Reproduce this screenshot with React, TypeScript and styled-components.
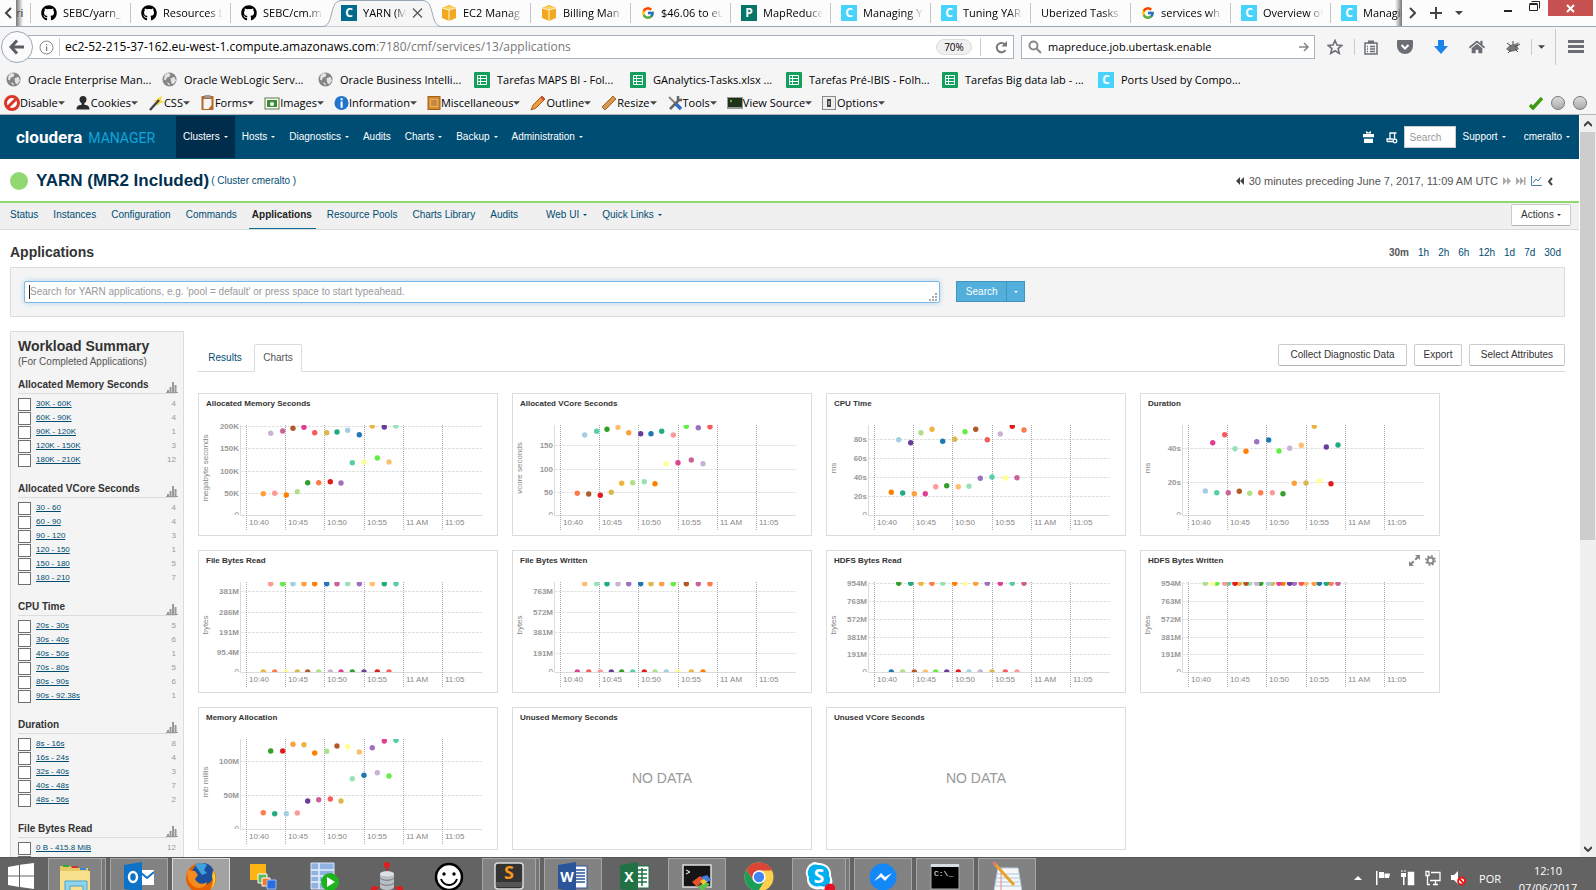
import React from "react";
import styled, { createGlobalStyle, css } from "styled-components";
import { FaGithub, FaHome } from "react-icons/fa";
import { FcGoogle } from "react-icons/fc";

const sans = `"Liberation Sans", Arial, sans-serif`;
const ui = `"Open Sans", "Segoe UI", sans-serif`;
const navy = "#004d73";

const GlobalStyle = createGlobalStyle`
  * { box-sizing: border-box; }
  html, body, #root { height: 100%; }
  body { margin: 0; background: #fff; font-family: ${sans}; }
  button { font: inherit; color: inherit; border: 0; background: none; padding: 0; margin: 0; }
  a { color: inherit; text-decoration: none; }
  h1, h2, h3 { margin: 0; }
  svg { display: block; flex: none; }
`;

const Screen = styled.div`
  height: 100vh;
  display: flex;
  flex-direction: column;
  overflow: hidden;
`;

/* ---------- browser chrome ---------- */

const Chrome = styled.header`
  background: #f5f5f6;
  border-bottom: 1px solid #b6b6b6;
  font: 11px/16px ${ui};
  color: #000;
  flex: none;
`;

const TabStrip = styled.div`
  height: 27px;
  display: flex;
  background: #fcfcfc;
  border-bottom: 1px solid #9aa7b5;
`;

const StripButton = styled.button<{ $w: number }>`
  width: ${(p) => p.$w}px;
  height: 26px;
  display: flex;
  align-items: center;
  justify-content: center;
  flex: none;
`;

const TabList = styled.div`
  position: relative;
  flex: 1;
  min-width: 0;
  height: 27px;
  display: flex;
  overflow: hidden;
  &::before, &::after {
    content: "";
    position: absolute;
    top: 0;
    bottom: 1px;
    width: 7px;
    z-index: 2;
  }
  &::before { left: 0; background: linear-gradient(to right, #777, transparent); }
  &::after { right: 0; background: linear-gradient(to left, #777, transparent); }
`;

const TabItem = styled.button<{ $active?: boolean; $stub?: boolean; $noEdge?: boolean }>`
  position: relative;
  flex: none;
  width: ${(p) => (p.$stub ? 15 : 100)}px;
  height: 26px;
  padding: 0 8px 0 ${(p) => (p.$stub ? 0 : 10)}px;
  display: flex;
  align-items: center;
  gap: 6px;
  text-align: left;
  ${(p) => p.$active && css`z-index: 1;`}
  &::after {
    content: "";
    position: absolute;
    right: 0;
    top: 3px;
    width: 1px;
    height: 20px;
    background: ${(p) => (p.$active || p.$noEdge ? "transparent" : "#c4c4c4")};
  }
`;

const TabShape = styled.svg`
  position: absolute;
  left: -11px;
  top: 0;
  z-index: -1;
`;

const TabText = styled.span`
  flex: 1;
  min-width: 0;
  overflow: hidden;
  white-space: nowrap;
  mask-image: linear-gradient(to right, #000 75%, transparent);
`;

const WindowControls = styled.div`
  display: flex;
  align-items: flex-start;
  padding: 0 3px 0 29px;
`;

const CloseButton = styled.button`
  width: 45px;
  height: 16px;
  background: #c75050;
  display: flex;
  align-items: center;
  justify-content: center;
`;

const AddressRow = styled.div`
  height: 40px;
  display: flex;
  align-items: center;
  padding-right: 5px;
`;

const BackButton = styled.button`
  width: 32px;
  height: 32px;
  margin-left: 1px;
  border: 1px solid #9aa7b5;
  border-radius: 50%;
  background: #fbfbfb;
  display: flex;
  align-items: center;
  justify-content: center;
  z-index: 1;
`;

const Field = styled.label<{ $search?: boolean }>`
  height: 24px;
  display: flex;
  align-items: center;
  background: #fff;
  border: 1px solid #a9b3bd;
  padding-left: ${(p) => (p.$search ? 6 : 10)}px;
  margin-left: ${(p) => (p.$search ? 7 : -5)}px;
  ${(p) => (p.$search ? css`flex: 0 0 294px;` : css`flex: 1;`)}
`;

const Url = styled.span`
  flex: 1;
  white-space: nowrap;
  font-size: 12px;
  span { color: #777; }
`;

const FieldInput = styled.input`
  flex: 1;
  min-width: 0;
  border: 0;
  outline: 0;
  padding: 0;
  margin-left: 6px;
  font: inherit;
  color: #000;
`;

const ZoomBadge = styled.button`
  width: 36px;
  height: 16px;
  border-radius: 8px;
  border: 1px solid #ddd;
  background: #f0f0f0;
  font-size: 10px;
  line-height: 14px;
`;

const Divider = styled.i<{ $h: number; $m?: number }>`
  width: 1px;
  height: ${(p) => p.$h}px;
  margin: 0 ${(p) => p.$m ?? 0}px;
  background: #ccc;
  flex: none;
`;

const ToolButton = styled.button<{ $w: number }>`
  width: ${(p) => p.$w}px;
  height: 24px;
  display: flex;
  align-items: center;
  justify-content: center;
  color: #6b6f75;
  flex: none;
`;

const BookmarkRow = styled.nav`
  height: 25px;
  display: flex;
  align-items: center;
  padding-left: 6px;
`;

const Bookmark = styled.a`
  width: 156px;
  display: flex;
  align-items: center;
  gap: 7px;
  white-space: nowrap;
`;

const DevRow = styled.div`
  height: 22px;
  display: flex;
  align-items: center;
  padding: 0 9px 0 4px;
  gap: 10px;
`;

const DevButton = styled.button`
  display: flex;
  align-items: center;
  white-space: nowrap;
  line-height: 16px;
`;

const Status = styled.div`
  margin-left: auto;
  display: flex;
  align-items: center;
  gap: 8px;
`;

const Lamp = styled.i`
  width: 14px;
  height: 14px;
  border-radius: 50%;
  border: 1px solid #777;
  background: linear-gradient(#dcdcdc, #aaa);
`;

const Letter = styled.span<{ $bg: string }>`
  width: 16px;
  height: 16px;
  background: ${(p) => p.$bg};
  color: #fff;
  font: bold 12px/16px ${ui};
  text-align: center;
  flex: none;
`;

/* ---------- page ---------- */

const Viewport = styled.div`
  flex: 1;
  min-height: 0;
  display: flex;
  overflow: hidden;
`;

const Page = styled.div`
  flex: 1;
  min-width: 0;
  overflow: hidden;
  color: #333;
  font-size: 10px;
  line-height: 14px;
`;

const ScrollTrack = styled.div`
  width: 17px;
  background: #f0f0f0;
  border-left: 1px solid #fff;
  display: flex;
  flex-direction: column;
  flex: none;
`;

const ScrollButton = styled.button`
  height: 17px;
  display: flex;
  align-items: center;
  justify-content: center;
`;

const ScrollThumb = styled.div`
  flex: 0 0 55%;
  margin-right: 1px;
  background: #cdcdcd;
`;

const Spacer = styled.div`
  flex: 1;
`;

const TopNav = styled.nav`
  height: 44px;
  background: ${navy};
  color: #fff;
  display: flex;
  align-items: center;
  padding: 0 2px 0 16px;
`;

const Brand = styled.a`
  width: 160px;
  display: flex;
  align-items: baseline;
  gap: 6px;
  font: bold 17px/20px Roboto, ${sans};
  span { font-weight: 400; font-size: 14px; color: #12a5dc; }
`;

const NavButton = styled.button<{ $active?: boolean }>`
  height: 42px;
  padding: 0 7px;
  display: flex;
  align-items: center;
  gap: 4px;
  white-space: nowrap;
  background: ${(p) => (p.$active ? "#002d4c" : "none")};
`;

const NavIcons = styled.div`
  margin-left: auto;
  display: flex;
  align-items: center;
  gap: 12px;
  margin-right: 6px;
`;

const NavUser = styled.div`
  display: flex;
  gap: 4px;
`;

const NavSearch = styled.input`
  width: 52px;
  height: 22px;
  padding: 0 5px;
  border: 1px solid #ccc;
  font: 10px ${sans};
  &::placeholder { color: #999; opacity: 1; }
`;

const TitleBar = styled.div`
  height: 44px;
  border-bottom: 2px solid #90d970;
  display: flex;
  align-items: center;
  padding: 1px 26px 0 10px;
`;

const Health = styled.i`
  width: 18px;
  height: 18px;
  border-radius: 50%;
  background: #90d970;
  margin-right: 8px;
`;

const ServiceName = styled.h1`
  font-size: 17px;
  line-height: 20px;
  color: #003050;
  margin-right: 2px;
`;

const ClusterLink = styled.a`
  color: ${navy};
`;

const TimeSpan = styled.div`
  margin-left: auto;
  display: flex;
  align-items: center;
  gap: 5px;
  color: #555;
  font-size: 11px;
`;

const SubNav = styled.nav`
  height: 27px;
  background: #f0f0f0;
  border-bottom: 1px solid #dcdcdc;
  display: flex;
  padding: 0 8px 0 7px;
  color: ${navy};
`;

const SubLink = styled.a<{ $active?: boolean; $pad?: number }>`
  height: 26px;
  padding: 5px 4px 0 3px;
  margin-right: 8px;
  margin-left: ${(p) => p.$pad ?? 0}px;
  display: flex;
  gap: 4px;
  white-space: nowrap;
  svg { margin-top: 6px; }
  ${(p) => p.$active && css`
    color: #222;
    font-weight: bold;
    border-bottom: 1px solid #0a7099;
  `}
`;

const Button = styled.button<{ $w: number }>`
  width: ${(p) => p.$w}px;
  height: 22px;
  display: flex;
  align-items: center;
  justify-content: center;
  gap: 3px;
  background: #fff;
  border: 1px solid #ccc;
  border-bottom-color: #b3b3b3;
  border-radius: 2px;
  color: #333;
  white-space: nowrap;
`;

const ActionsSlot = styled.div`
  margin: 1px 0 0 auto;
`;

const Body = styled.main`
  padding: 0 14px 0 10px;
`;

const HeadingRow = styled.div`
  padding: 14px 4px 7px 0;
  display: flex;
  justify-content: space-between;
`;

const Heading = styled.h2`
  font-size: 14px;
  line-height: 16px;
`;

const Ranges = styled.div`
  display: flex;
  gap: 9px;
  line-height: 18px;
  height: 16px;
  color: ${navy};
  b { color: #555; }
`;

const SearchPanel = styled.form`
  height: 50px;
  padding: 13px;
  background: #f4f4f4;
  border: 1px solid #dcdcdc;
  display: flex;
`;

const QueryWrap = styled.div`
  position: relative;
  width: 60%;
  height: 22px;
  margin-right: 16px;
`;

const Query = styled.textarea`
  display: block;
  width: 100%;
  height: 22px;
  padding: 3px 5px;
  resize: none;
  overflow: hidden;
  border: 1px solid #7fb8e6;
  border-radius: 2px;
  outline: 0;
  box-shadow: 0 0 5px #a9d4f3;
  font: 10px/14px ${sans};
  &::placeholder { color: #999; opacity: 1; }
`;

const Grip = styled.svg`
  position: absolute;
  right: 3px;
  bottom: 2px;
`;

const CaretBar = styled.i`
  position: absolute;
  left: 5px;
  top: 4px;
  width: 1px;
  height: 14px;
  background: #222;
`;

const Primary = styled.button<{ $w: number }>`
  width: ${(p) => p.$w}px;
  height: 21px;
  display: flex;
  align-items: center;
  justify-content: center;
  color: #fff;
  background: #52aedb;
  border: 1px solid #4394bd;
  & + & { border-left: 0; }
`;

const Columns = styled.div`
  display: flex;
  gap: 14px;
  margin-top: 14px;
  align-items: stretch;
`;

const Sidebar = styled.aside`
  flex: 0 0 174px;
  padding: 6px 7px 7px;
  background: #f4f4f4;
  border: 1px solid #dcdcdc;
`;

const SideTitle = styled.h2`
  font-size: 14px;
  line-height: 16px;
`;

const SideNote = styled.div`
  color: #555;
  padding-top: 1px;
  margin-bottom: 7px;
`;

const Facet = styled.fieldset`
  border: 0;
  padding: 0;
  margin: 0 0 13px;
`;

const FacetHead = styled.div`
  height: 18px;
  border-bottom: 1px solid #dcdcdc;
  margin-bottom: 3px;
  display: flex;
  justify-content: space-between;
  align-items: flex-end;
  h3 { font-size: 10px; line-height: 16px; }
  svg { margin-right: -2px; }
`;

const FacetRow = styled.label`
  height: 14px;
  display: flex;
  align-items: center;
  font-size: 8px;
  line-height: 12px;
  color: #999;
`;

const Tick = styled.input`
  appearance: none;
  width: 13px;
  height: 13px;
  margin: 0 5px 0 0;
  background: #fff;
  border: 1px solid #707070;
`;

const FacetName = styled.span`
  flex: 1;
  color: ${navy};
  text-decoration: underline;
`;

const Results = styled.section`
  flex: 1;
  min-width: 0;
  padding-top: 13px;
`;

const TabBar = styled.div`
  height: 28px;
  display: flex;
  border-bottom: 1px solid #dcdcdc;
`;

const PageTab = styled.button<{ $active?: boolean }>`
  height: 28px;
  width: ${(p) => (p.$active ? 48 : 56)}px;
  padding-right: ${(p) => (p.$active ? 0 : 2)}px;
  border: 1px solid ${(p) => (p.$active ? "#dcdcdc" : "transparent")};
  border-bottom-color: ${(p) => (p.$active ? "#fff" : "transparent")};
  border-radius: 2px 2px 0 0;
  color: ${(p) => (p.$active ? "#555" : navy)};
`;

const TabActions = styled.div`
  margin-left: auto;
  display: flex;
  gap: 7px;
`;

const Charts = styled.div`
  margin-top: 21px;
  display: grid;
  grid-template-columns: repeat(auto-fill, 300px);
  gap: 14px;
`;

const Card = styled.article`
  height: 143px;
  border: 1px solid #dcdcdc;
`;

const CardHead = styled.div`
  height: 25px;
  padding: 4px 3px 0 7px;
  display: flex;
  justify-content: space-between;
  h3 { font-size: 8px; line-height: 12px; }
`;

const CardTools = styled.div`
  display: flex;
  gap: 5px;
`;

const Empty = styled.div`
  height: 90px;
  display: flex;
  align-items: center;
  justify-content: center;
  font-size: 14px;
  color: #999;
`;

/* ---------- taskbar ---------- */

const Taskbar = styled.footer`
  height: 33px;
  flex: none;
  background: #636363;
  border-top: 1px solid #555;
  display: flex;
  overflow: hidden;
  color: #fff;
  font: 11px/17px ${ui};
`;

const StartButton = styled.button`
  width: 48px;
  height: 40px;
  padding: 5px 0 0 8px;
  flex: none;
  display: flex;
  align-items: flex-start;
`;

const Task = styled.button<{ $look?: "open" | "active" | "stack" }>`
  position: relative;
  width: ${(p) => (p.$look === "stack" ? 54 : 58)}px;
  margin-right: ${(p) => (p.$look === "stack" ? 8 : 4)}px;
  height: 40px;
  padding-top: 4px;
  flex: none;
  display: flex;
  justify-content: center;
  align-items: flex-start;
  ${(p) => p.$look && css`
    background: ${p.$look === "active" ? "#a2a2a2" : "#828282"};
    border: 1px solid ${p.$look === "active" ? "#ddd" : "#a5a5a5"};
    padding-top: 3px;
  `}
  ${(p) => p.$look === "stack" && css`
    box-shadow: 4px 0 0 -1px #777, 4px 0 0 0 #a5a5a5;
  `}
`;

const Tray = styled.div`
  margin-left: auto;
  display: flex;
  align-items: flex-start;
  gap: 9px;
  padding: 12px 10px 0 0;
`;

const Clock = styled.time`
  width: 76px;
  text-align: center;
  margin-top: -8px;
`;

const Lang = styled.span`
  width: 26px;
  text-align: right;
`;

/* ---------- icons ---------- */

const Caret = ({ w = 5, color = "currentColor" }: { w?: number; color?: string }) => (
  <svg width={w} height={Math.ceil(w / 2)} viewBox="0 0 10 5" fill={color}><path d="M0 0h10L5 5z" /></svg>
);
const Cube = () => (
  <svg width="16" height="16" viewBox="0 0 16 16"><path d="M1 3l7-3 7 3v10l-7 3-7-3z" fill="#f2a91f" /><path d="M1 3l7-2 7 2-7 2z" fill="#fbd25e" /><path d="M8 5v11M8 5L1 3M8 5l7-2" stroke="#fff3cf" fill="none" /></svg>
);
const Sheet = () => (
  <svg width="16" height="16" viewBox="0 0 16 16"><rect width="16" height="16" rx="1" fill="#12a05c" /><path d="M3.500 3.500h9v9h-9zM3.500 6.500h9M3.500 9.500h9M6.500 3.500v9" stroke="#fff" fill="none" /></svg>
);
const Globe = () => (
  <svg width="15" height="15" viewBox="0 0 16 16"><circle cx="8" cy="8" r="7.500" fill="#858585" /><path d="M3 3l3-2 3 1-1 3-3 1-1 3-2-1zM9 7l4-2 2 4-3 4-2-1zM5 11l3 1 0 3z" fill="#e4e4e4" /></svg>
);
const Bars = () => (
  <svg width="12" height="11" viewBox="0 0 12 11" fill="#999"><path d="M0 10h12v1H0zM1 8h2v2H1zM3.500 5h2v5h-2zM6 0h2v10H6zM8.500 3h2v7h-2z" /></svg>
);

const devIcons: Record<string, React.ReactNode> = {
  Disable: <svg width="16" height="16" viewBox="0 0 16 16"><circle cx="8" cy="8" r="6.500" fill="#fff" stroke="#d9372a" strokeWidth="3" /><path d="M4 12l8-8" stroke="#d9372a" strokeWidth="3" /></svg>,
  Cookies: <svg width="16" height="16" viewBox="0 0 16 16" fill="#2b2b2b"><circle cx="8" cy="4.500" r="3.500" /><path d="M6.500 7h3v3c4 0 5 2 5 4.500h-13c0-2.500 1-4.500 5-4.500z" /></svg>,
  CSS: <svg width="16" height="16" viewBox="0 0 16 16"><path d="M10 3l4-2-1 4 3 3-4 0-3 3 0-4-4-2 4 0z" fill="#ffd83a" /><path d="M2 15L11 5" stroke="#444" strokeWidth="2.500" /></svg>,
  Forms: <svg width="15" height="16" viewBox="0 0 14 16"><rect x="1" y="1" width="12" height="14" fill="#b06a2c" /><path d="M3 4h8v6l-3 4H3z" fill="#f4f4f4" /><rect x="4" y="0" width="6" height="3" fill="#999" /></svg>,
  Images: <svg width="16" height="16" viewBox="0 0 16 16"><rect x="1" y="3" width="14" height="11" fill="#fff" stroke="#5c7a3e" /><rect x="3" y="5" width="10" height="7" fill="#3c8c34" /><circle cx="8" cy="9" r="2" fill="#fff" /></svg>,
  Information: <svg width="15" height="16" viewBox="0 0 16 16"><circle cx="8" cy="8" r="7.500" fill="#1f74cc" /><path d="M7 6.500h2.200V13H7zM7 3h2.200v2H7z" fill="#fff" /></svg>,
  Miscellaneous: <svg width="14" height="16" viewBox="0 0 14 16"><rect x="1" y="1.500" width="12" height="13" fill="#d58a31" stroke="#a3601a" /><path d="M3 4h8v8H3z" fill="#e9b062" /><path d="M4 6h6M4 8h6M4 10h6" stroke="#a3601a" /></svg>,
  Outline: <svg width="16" height="16" viewBox="0 0 16 16"><path d="M1 15l2-5 9-9 3 3-9 9z" fill="#ef9a3d" stroke="#a75f20" /><path d="M11 2l3 3" stroke="#d44" strokeWidth="2" /></svg>,
  Resize: <svg width="16" height="16" viewBox="0 0 16 16"><path d="M1 12L12 1l3 3L4 15z" fill="#d9954f" stroke="#9e6529" /></svg>,
  Tools: <svg width="16" height="16" viewBox="0 0 16 16"><path d="M2 2l8 8" stroke="#888" strokeWidth="2" /><path d="M3 14L12 5M11 1v4h4" stroke="#666" strokeWidth="2.500" fill="none" /><path d="M9 9l5 5" stroke="#2e6cc7" strokeWidth="3.500" /></svg>,
  "View Source": <svg width="16" height="16" viewBox="0 0 16 16"><rect x="0" y="2" width="16" height="12" fill="#999" /><rect x="1" y="3" width="14" height="9" fill="#1e3318" /><path d="M3 5l2 1-2 1" stroke="#7c6" fill="none" /></svg>,
  Options: <svg width="15" height="16" viewBox="0 0 15 16"><rect x=".5" y="1.500" width="13" height="13" fill="#eee" stroke="#888" /><path d="M5 4h4v8H5z" fill="#444" /><path d="M6.500 6h1v4h-1z" fill="#eee" /></svg>,
};

const Doc = ({ color, mark, table }: { color: string; mark: string; table?: boolean }) => (
  <svg width="30" height="30" viewBox="0 0 30 30">
    <rect x="16" y="4" width="13" height="22" fill="#fff" stroke={color} />
    <path d={table ? "M18 8h9M18 12h9M18 16h9M18 20h9M22 6v18" : "M18 8h9M18 11h9M18 14h9M18 17h9M18 20h9"} stroke={color} strokeWidth="1.500" />
    <path d="M0 3l18-3v30L0 27z" fill={color} />
    <text x="9" y="20" fontSize="14" fontWeight="bold" fill="#fff" textAnchor="middle" fontFamily="Open Sans">{mark}</text>
  </svg>
);

/* ---------- chart data ---------- */

const hue: Record<string, string> = {
  L: "#cab2d6", M: "#ca6399", B: "#b15928", P: "#e0408f", R: "#f95b5b", Y: "#dab84e",
  T: "#20ab80", S: "#a6cee3", N: "#1f78b4", A: "#edb441", V: "#6a3d9a", G: "#98e2b8",
  O: "#ff7f00", Q: "#fd9f3a", F: "#fdbf6f", K: "#fb9a99", J: "#b2df8a", D: "#33a02c",
  C: "#ff7a4d", E: "#e31a1c", U: "#9e70c2", H: "#55d0a4", W: "#ffff99", Z: "#63ee43",
};
const lateX = [72.7, 84.7, 95, 106, 116.7, 128.7, 139, 149.7, 161.3, 174.3, 186.3, 198];
const earlyX = [65.3, 76.7, 88.3, 99.3, 109.7, 120.7, 132.3, 143, 154.3, 166, 179.3, 191];
const same = (y: number) => Array(12).fill(y) as number[];

type ChartSpec = {
  title: string;
  unit?: string;
  ticks?: [string, number][];
  late?: [string, number[]];
  early?: [string, number[]];
  tools?: boolean;
};

const charts: ChartSpec[] = [
  { title: "Allocated Memory Seconds", unit: "megabyte seconds", ticks: [["200K", 33], ["150K", 55], ["100K", 78], ["50K", 100]],
    late: ["LMBPRYTSNAVG", [40.3, 38, 35.3, 34.3, 39.7, 39.7, 39, 37.3, 41.7, 33, 34, 33]],
    early: ["QKOJDCEUHWZF", [100.7, 100.3, 102, 98.7, 89.7, 89.7, 88.7, 90, 69.7, 69, 65, 69]] },
  { title: "Allocated VCore Seconds", unit: "vcore seconds", ticks: [["150", 52], ["100", 76], ["50", 99]],
    late: ["SHDFQVNTKZUR", [42, 38.3, 36.3, 34.3, 39.7, 40.7, 40.7, 38.3, 42, 33.3, 34.7, 33.7]],
    early: ["CBEYAJGOWPML", [100.3, 101, 102.3, 99.3, 90.3, 89.7, 88.7, 90.7, 70.7, 69.7, 67, 70.7]] },
  { title: "CPU Time", unit: "ms", ticks: [["80s", 46], ["60s", 65], ["40s", 84], ["20s", 103]],
    late: ["SVJANYZBRLEC", [46.7, 49.7, 39.7, 36.3, 48.3, 46.3, 38.7, 36.3, 46.7, 41, 33.3, 37]],
    early: ["OTQPKDFGUHWM", [99.3, 100, 100.7, 100.7, 93.7, 92.7, 93.7, 93.3, 85.3, 84, 85, 84.7]] },
  { title: "Duration", unit: "ms", ticks: [["40s", 55], ["20s", 89]],
    late: ["PRGOUNZLFAVT", [49.7, 41.7, 55.7, 58.3, 48.7, 47, 58, 55.3, 52.3, 33.3, 54, 52]],
    early: ["SHMBJCKDQYWE", [98, 99.7, 99.7, 98.3, 100.3, 99.7, 99.7, 100.7, 90.3, 90, 88, 90.7]] },
  { title: "File Bytes Read", unit: "bytes", ticks: [["381M", 41], ["286M", 62], ["191M", 82], ["95.4M", 102]],
    late: ["KZSQONMGUFTH", same(33.7)], early: ["ACWYBJLPDVER", same(122)] },
  { title: "File Bytes Written", unit: "bytes", ticks: [["763M", 41], ["572M", 62], ["381M", 82], ["191M", 103]],
    late: ["FGTLUNYQZBMC", same(33.7)], early: ["PRKVDHEJSWAO", same(122)] },
  { title: "HDFS Bytes Read", unit: "bytes", ticks: [["954M", 33], ["763M", 51], ["572M", 69], ["381M", 87], ["191M", 104]],
    late: ["DTACGOWQUPHM", same(33.3)], early: ["NJBFZVESLYRK", same(122)] },
  { title: "HDFS Bytes Written", unit: "bytes", tools: true, ticks: [["954M", 33], ["763M", 51], ["572M", 69], ["381M", 87], ["191M", 104]],
    late: ["WKEBLSPVRQTM", same(33.3)], early: ["JZHAGDYOUFNC", same(33.3)] },
  { title: "Memory Allocation", unit: "mb millis", ticks: [["100M", 54], ["50M", 88]],
    late: ["DEQAOJBWFUPH", [44, 44, 37.3, 37.7, 46, 44.3, 39, 39.7, 45, 40.7, 34, 33.3]],
    early: ["CTSKVMRYGNLZ", [105.7, 106.7, 106.7, 106, 94, 92.7, 92, 94, 71.7, 68.3, 65.7, 69]] },
  { title: "Unused Memory Seconds" },
  { title: "Unused VCore Seconds" },
];

const times: [string, number][] = [["10:40", 48], ["10:45", 87], ["10:50", 126], ["10:55", 166], ["11 AM", 205], ["11:05", 244]];

const Plot = ({ spec }: { spec: ChartSpec }) => (
  <svg width="298" height="114" viewBox="1 26 298 114" fontFamily="Liberation Sans" fontSize="8" fill="#888">
    <clipPath id="plot-area"><rect x="32" y="32" width="254" height="90" /></clipPath>
    <text transform="rotate(-90)" x="-75" y="10" textAnchor="middle">{spec.unit}</text>
    {spec.ticks!.map(([label, y]) => (
      <g key={label}>
        <path d={`M42 ${y + 0.5}H284`} stroke="#e2e2e2" strokeDasharray="3 1" />
        <text x="41" y={y + 3} textAnchor="end" fontWeight="bold" fill="#999">{label}</text>
      </g>
    ))}
    <g clipPath="url(#plot-area)"><text x="41" y="124" textAnchor="end">0</text></g>
    <path d="M42.500 32V122.500H284" stroke="#dcdcdc" fill="none" />
    {times.map(([label, x]) => (
      <g key={label}>
        <path d={`M${x + 0.5} 32V137`} stroke="#aaa" strokeDasharray="1 1" />
        <text x={x + 3} y="132">{label}</text>
      </g>
    ))}
    <g clipPath="url(#plot-area)">
      {spec.early![0].split("").map((c, i) => <circle key={c} cx={earlyX[i]} cy={spec.early![1][i]} r="2.700" fill={hue[c]} />)}
      {spec.late![0].split("").map((c, i) => <circle key={c} cx={lateX[i]} cy={spec.late![1][i]} r="2.700" fill={hue[c]} />)}
    </g>
  </svg>
);

const facets: [string, [string, number][]][] = [
  ["Allocated Memory Seconds", [["30K - 60K", 4], ["60K - 90K", 4], ["90K - 120K", 1], ["120K - 150K", 3], ["180K - 210K", 12]]],
  ["Allocated VCore Seconds", [["30 - 60", 4], ["60 - 90", 4], ["90 - 120", 3], ["120 - 150", 1], ["150 - 180", 5], ["180 - 210", 7]]],
  ["CPU Time", [["20s - 30s", 5], ["30s - 40s", 6], ["40s - 50s", 1], ["70s - 80s", 5], ["80s - 90s", 6], ["90s - 92.38s", 1]]],
  ["Duration", [["8s - 16s", 8], ["16s - 24s", 4], ["32s - 40s", 3], ["40s - 48s", 7], ["48s - 56s", 2]]],
  ["File Bytes Read", [["0 B - 415.8 MiB", 12], ["415.8 MiB - 420 MiB", 12]]],
];

const cBright = <Letter $bg="#47d3fc">C</Letter>;
const tabs: { text: string; icon?: React.ReactNode; active?: boolean; noEdge?: boolean }[] = [
  { text: "SEBC/yarn_", icon: <FaGithub size={16} /> },
  { text: "Resources L", icon: <FaGithub size={16} /> },
  { text: "SEBC/cm.m", icon: <FaGithub size={16} />, noEdge: true },
  { text: "YARN (M", icon: <Letter $bg="#006a8c">C</Letter>, active: true },
  { text: "EC2 Manag", icon: <Cube /> },
  { text: "Billing Man", icon: <Cube /> },
  { text: "$46.06 to eu", icon: <FcGoogle size={14} /> },
  { text: "MapReduce", icon: <Letter $bg="#077568">P</Letter> },
  { text: "Managing Y", icon: cBright },
  { text: "Tuning YAR", icon: cBright },
  { text: "Uberized Tasks -" },
  { text: "services wh", icon: <FcGoogle size={14} /> },
  { text: "Overview of", icon: cBright },
  { text: "Managing", icon: cBright },
];

const bookmarks: [string, React.ReactNode][] = [
  ["Oracle Enterprise Man...", <Globe />], ["Oracle WebLogic Serv...", <Globe />], ["Oracle Business Intelli...", <Globe />],
  ["Tarefas MAPS BI - Fol...", <Sheet />], ["GAnalytics-Tasks.xlsx ...", <Sheet />], ["Tarefas Pré-IBIS - Folh...", <Sheet />],
  ["Tarefas Big data lab - ...", <Sheet />], ["Ports Used by Compo...", cBright],
];

const tasks: { look?: "open" | "active" | "stack"; name: string; icon: React.ReactNode }[] = [
  { name: "Explorer", look: "stack", icon: <svg width="34" height="30" viewBox="0 0 34 30"><path d="M2 4h10l2 2h16v24H2z" fill="#e8c765" /><path d="M2 9h30v21H2z" fill="#f6e08d" /><path d="M5 3h6v2H5z" fill="#3a3" /><path d="M14 4h6v2h-6z" fill="#c33" /><path d="M22 6h6v2h-6z" fill="#38d" /><path d="M7 19h22v11h-4v-6H12v6H7z" fill="#8fd4ee" stroke="#4ba3cc" /></svg> },
  { name: "Outlook", look: "open", icon: <svg width="30" height="30" viewBox="0 0 30 30"><path d="M15 8h15v15H15z" fill="#fff" /><path d="M16 10l7 6 7-6" stroke="#0e72c6" strokeWidth="2" fill="none" /><path d="M0 3l18-3v30L0 27z" fill="#0e72c6" /><ellipse cx="9" cy="15" rx="4" ry="5" stroke="#fff" strokeWidth="2.500" fill="none" /></svg> },
  { name: "Firefox", look: "active", icon: <svg width="32" height="32" viewBox="0 0 32 32"><circle cx="16" cy="16" r="15" fill="#e66000" /><circle cx="18" cy="12" r="11" fill="#1b4f9c" /><path d="M10 3c5-3 9-2 12 0l-3 5 3 3-5 2z" fill="#3fa0dd" /><path d="M3 7c2 2 4 2 7 2l3 4-3 4c2 5 8 6 12 3-1 6-8 7-12 5C4 22 1 15 3 7z" fill="#f58a1f" /><path d="M28 8c4 7 3 14-2 19 1-4 3-8 1-12z" fill="#ffcb2e" /></svg> },
  { name: "Virtual machines", icon: <svg width="28" height="30" viewBox="0 0 28 30"><path d="M1 2h16v16H1z" fill="#fdb515" /><path d="M9 12h9v9H9z" fill="#5cb95c" stroke="#fff" /><path d="M13 16h8v8h-8z" fill="#f47b20" stroke="#fff" /><path d="M18 18h9v9h-9z" fill="#2b6ce0" stroke="#9bf" /></svg> },
  { name: "Data runner", icon: <svg width="30" height="32" viewBox="0 0 30 32"><path d="M1 1h23v26H1z" fill="#8fb2e3" stroke="#dbe7f8" /><path d="M1 8h23M1 14h23M1 20h23M9 1v26" stroke="#e6effb" strokeWidth="1.500" /><circle cx="20" cy="20" r="9" fill="#1db31d" /><path d="M17 15l8 5-8 5z" fill="#fff" /></svg> },
  { name: "Database", icon: <svg width="32" height="32" viewBox="0 0 32 32"><path d="M16 4v8M16 20L4 28M16 20l12 8" stroke="#c22" strokeWidth="1.500" /><path d="M9 12c0-4 14-4 14 0v13c0 4-14 4-14 0z" fill="#b9bfc6" /><ellipse cx="16" cy="12" rx="7" ry="2.500" fill="#dde1e5" /><path d="M9 16c2 3 12 3 14 0M9 21c2 3 12 3 14 0" stroke="#777" fill="none" /><circle cx="16" cy="3" r="3" fill="#e31b1b" /><circle cx="3" cy="27" r="3" fill="#e31b1b" /><circle cx="29" cy="27" r="3" fill="#e31b1b" /></svg> },
  { name: "Smiley", icon: <svg width="30" height="30" viewBox="0 0 30 30"><circle cx="15" cy="15" r="13" fill="#fff" stroke="#000" strokeWidth="2.500" /><circle cx="10" cy="12" r="1.700" /><circle cx="20" cy="12" r="1.700" /><path d="M7 17c3 8 13 8 16 0" stroke="#000" strokeWidth="2" fill="none" /></svg> },
  { name: "Sublime Text", look: "stack", icon: <svg width="30" height="30" viewBox="0 0 30 30"><rect x="1" y="1" width="28" height="26" rx="3" fill="#333" stroke="#ddd" strokeWidth="1.500" /><path d="M2 20h26v5H2z" fill="#555" /><text x="15" y="17" fontSize="18" fontWeight="bold" textAnchor="middle" fill="#f8961d" fontFamily="Open Sans">S</text></svg> },
  { name: "Word", look: "open", icon: <Doc color="#2a5699" mark="W" /> },
  { name: "Excel", icon: <Doc color="#207245" mark="X" table /> },
  { name: "Terminal", look: "open", icon: <svg width="30" height="30" viewBox="0 0 30 30"><rect x="1" y="3" width="28" height="22" fill="#151515" stroke="#ddd" strokeWidth="1.500" /><path d="M4 8l4 2-4 2" stroke="#fff" fill="none" /><path d="M10 20l8-6 4 4-7 7z" fill="#e5512d" /><path d="M19 15l6-2 4 5-5 3z" fill="#3d7fe0" /><path d="M15 25l8-5 5 2-7 7z" fill="#5cc24c" /><path d="M18 19l4-2 3 3-4 3z" fill="#f3c62d" /></svg> },
  { name: "Chrome", icon: <svg width="30" height="30" viewBox="0 0 30 30"><circle cx="15" cy="15" r="14.500" fill="#fcd04a" /><path d="M2.500 7.700A14.500 14.500 0 0 0 14 29.500L21 18H9z" fill="#1b9e5a" /><path d="M2.500 7.700A14.500 14.500 0 0 1 28 8.500H15L9 18z" fill="#db4437" /><circle cx="15" cy="15" r="6.700" fill="#fff" /><circle cx="15" cy="15" r="5.200" fill="#4285f4" /></svg> },
  { name: "Skype", look: "stack", icon: <svg width="32" height="32" viewBox="0 0 32 32"><path d="M9 1c3-2 5 0 7 0 8 0 13 6 12 13 2 4 2 8-1 11-3 3-7 3-9 2C9 29 3 23 4 15 1 11 4 3 9 1z" fill="#fff" /><path d="M10 3c3-1 4 0 6 0 7 0 11 5 10 11 2 3 1 7-1 9s-5 2-7 1C10 26 5 21 6 15 3 11 6 4 10 3z" fill="#00aff0" /><text x="16" y="21" fontSize="19" fontWeight="bold" textAnchor="middle" fill="#fff" fontFamily="Open Sans">S</text><circle cx="27" cy="27" r="5.500" fill="#e81123" /></svg> },
  { name: "Messenger", look: "open", icon: <svg width="28" height="30" viewBox="0 0 28 30"><circle cx="14" cy="15" r="13.500" fill="#1488f8" /><path d="M5 19l7-8 4 4 7-4-7 8-4-4z" fill="#fff" /></svg> },
  { name: "Command Prompt", look: "open", icon: <svg width="30" height="30" viewBox="0 0 30 30"><rect x="1" y="3" width="28" height="24" fill="#000" stroke="#aaa" /><path d="M1 2h28v3H1z" fill="#d8dde3" /><text x="4" y="14" fontSize="8" fill="#fff" fontFamily="Liberation Mono">C:\_</text></svg> },
  { name: "Notepad", look: "open", icon: <svg width="30" height="32" viewBox="0 0 30 32"><path d="M6 6h20l4 24H2z" fill="#f7f7f7" stroke="#b9d3e8" /><path d="M5 12h21M5 16h22M4 20h23M4 24h24" stroke="#a9c7e4" /><path d="M9 6v24" stroke="#e88" /><path d="M2 1l20 22" stroke="#e9a32c" strokeWidth="3" /><path d="M1 0l3 3" stroke="#d77" strokeWidth="3" /></svg> },
];

const Arrow = ({ d, w = 10, color = "#444", sw = 2 }: { d: string; w?: number; color?: string; sw?: number }) => (
  <svg width={w} height="12" viewBox={`0 0 ${w} 12`} fill="none" stroke={color} strokeWidth={sw}><path d={d} /></svg>
);

const topMenus: [string, boolean][] = [["Clusters", true], ["Hosts", true], ["Diagnostics", true], ["Audits", false], ["Charts", true], ["Backup", true], ["Administration", true]];
const subLinks = ["Status", "Instances", "Configuration", "Commands", "Applications", "Resource Pools", "Charts Library", "Audits"];

export default function App() {
  return (
    <Screen>
      <GlobalStyle />
      <Chrome>
        <TabStrip>
          <StripButton $w={16} aria-label="Scroll tabs left"><Arrow d="M7 1L2 6l5 5" w={8} /></StripButton>
          <TabList>
            <TabItem $stub>ri</TabItem>
            {tabs.map((t, i) => (
              <TabItem key={i} $active={t.active} $noEdge={t.noEdge}>
                {t.active && (
                  <TabShape width="124" height="27" viewBox="0 0 124 27">
                    <path d="M0 27C9 27 10 20 12 12C14 4 16 .5 22 .5H102C108 .5 110 4 112 12C114 20 115 27 124 27z" fill="#f6f6f7" stroke="#9aa7b5" />
                  </TabShape>
                )}
                {t.icon}
                <TabText>{t.text}</TabText>
                {t.active && <Arrow d="M1 1.500l9 9M10 1.500l-9 9" w={11} color="#555" sw={1.2} />}
              </TabItem>
            ))}
          </TabList>
          <StripButton $w={20} aria-label="Scroll tabs right"><Arrow d="M2 1l5 5-5 5" w={8} /></StripButton>
          <StripButton $w={28} aria-label="New tab"><Arrow d="M6 0v12M0 6h12" w={12} /></StripButton>
          <StripButton $w={17} aria-label="List all tabs"><Caret w={8} color="#444" /></StripButton>
          <WindowControls>
            <StripButton $w={24} aria-label="Minimize"><svg width="8" height="18"><path d="M0 6h8v2H0z" fill="#222" /></svg></StripButton>
            <StripButton $w={28} aria-label="Restore"><svg width="11" height="26" fill="none" stroke="#222"><path d="M.5 4.500h8v6h-8zM.5 3.500h8M2.500 1.500h8v7" /></svg></StripButton>
            <CloseButton aria-label="Close"><Arrow d="M1 3l7 7M8 3L1 10" w={9} color="#fff" /></CloseButton>
          </WindowControls>
        </TabStrip>
        <AddressRow>
          <BackButton aria-label="Back"><svg width="16" height="16" viewBox="0 0 16 16" fill="none" stroke="#5a5d61" strokeWidth="3"><path d="M8 1.500L2 8l6 6.500M2 8h13" /></svg></BackButton>
          <Field as="div">
            <svg width="15" height="15" viewBox="0 0 15 15"><circle cx="7.500" cy="7.500" r="6.500" stroke="#888" fill="none" /><path d="M7 6.500h1.200V11H7zM7 4h1.200v1.300H7z" fill="#777" /></svg>
            <Divider $h={18} $m={5} />
            <Url>ec2-52-215-37-162.eu-west-1.compute.amazonaws.com<span>:7180/cmf/services/13/applications</span></Url>
            <ZoomBadge>70%</ZoomBadge>
            <Divider $h={18} $m={8} />
            <ToolButton $w={24} aria-label="Reload"><svg width="13" height="13" viewBox="0 0 13 13" fill="none" stroke="#777" strokeWidth="2"><path d="M10.500 9A4.700 4.700 0 1 1 10 3.500" /><path d="M12 0v5.500H6.500z" fill="#777" stroke="none" /></svg></ToolButton>
          </Field>
          <Field $search>
            <svg width="14" height="14" viewBox="0 0 14 14" fill="none" stroke="#888" strokeWidth="2"><circle cx="5.500" cy="5.500" r="4" /><path d="M8.500 8.500L13 13" /></svg>
            <FieldInput aria-label="Search the web" defaultValue="mapreduce.job.ubertask.enable" />
            <ToolButton $w={20} as="span"><Arrow d="M0 6h9M5 2l4 4-4 4" w={11} color="#888" sw={1.6} /></ToolButton>
          </Field>
          <ToolButton $w={39} aria-label="Bookmark"><svg width="16" height="16" viewBox="0 0 16 16" fill="none" stroke="#6b6f75" strokeWidth="1.600"><path d="M8 1.500l2 4.500 4.800.4-3.700 3.200 1.200 4.800L8 11.800l-4.300 2.600 1.200-4.800L1.200 6.400 6 6z" /></svg></ToolButton>
          <Divider $h={16} />
          <ToolButton $w={32} aria-label="Bookmarks"><svg width="14" height="15" viewBox="0 0 14 15" fill="none" stroke="currentColor" strokeWidth="1.500"><path d="M1 3h12v11H1zM3 6.500h1M6 6.500h5M3 9h1M6 9h5M3 11.500h1M6 11.500h5" /><path d="M4 2h6" strokeWidth="3" /></svg></ToolButton>
          <ToolButton $w={36} aria-label="Pocket"><svg width="16" height="14" viewBox="0 0 16 14"><path d="M1 0h14q1 0 1 1v5a8 8 0 0 1-16 0V1q0-1 1-1z" fill="currentColor" /><path d="M4.500 5L8 8.500 11.500 5" stroke="#fff" strokeWidth="2" fill="none" /></svg></ToolButton>
          <ToolButton $w={36} aria-label="Downloads"><svg width="14" height="14" viewBox="0 0 14 14" fill="#1a84e8"><path d="M4 0h6v6h4l-7 8-7-8h4z" /></svg></ToolButton>
          <ToolButton $w={36} aria-label="Home"><FaHome size={16} /></ToolButton>
          <ToolButton $w={36} aria-label="Firebug"><svg width="16" height="12" viewBox="0 0 16 12"><path d="M1 8l4-4 5-1 4-2-2 4 2 3-4 2-5 1z" fill="#777" /><path d="M2 2l4 3M8 0l0 4M15 3l-5 3M3 12l3-3M10 8l3 3" stroke="#444" /></svg></ToolButton>
          <Divider $h={16} />
          <ToolButton $w={18} aria-label="Firebug menu"><Caret w={7} color="#444" /></ToolButton>
          <Divider $h={36} $m={5} />
          <ToolButton $w={30} aria-label="Menu"><svg width="16" height="14" fill="#6b6f75"><path d="M0 0h16v3H0zM0 5h16v3H0zM0 10h16v3H0z" /></svg></ToolButton>
        </AddressRow>
        <BookmarkRow>
          {bookmarks.map(([t, icon]) => <Bookmark key={t} href="#">{icon}{t}</Bookmark>)}
        </BookmarkRow>
        <DevRow>
          {Object.keys(devIcons).map((k) => <DevButton key={k}>{devIcons[k]}{k}<Caret w={7} color="#444" /></DevButton>)}
          <Status>
            <svg width="14" height="13" viewBox="0 0 14 13"><path d="M1 8l3 3L13 1" stroke="#3f9a12" strokeWidth="3.500" fill="none" /></svg>
            <Lamp /><Lamp />
          </Status>
        </DevRow>
      </Chrome>

      <Viewport>
        <Page>
          <TopNav>
            <Brand href="#">cloudera<span>MANAGER</span></Brand>
            {topMenus.map(([t, menu], i) => <NavButton key={t} $active={i === 0}>{t}{menu && <Caret w={4} />}</NavButton>)}
            <NavIcons>
              <svg width="11" height="12" viewBox="0 0 11 12" fill="#fff"><path d="M0 3h11v3.500H0zM1 7.500h9V12H1zM3 0l2.500 1.500L8 0v2.500H3z" /><path d="M0 7h11" stroke={navy} /></svg>
              <svg width="12" height="13" viewBox="0 0 12 13" fill="none" stroke="#fff" strokeWidth="1.300"><path d="M4 8V2h6.500M8.500 2v6M1 10.500h6M1 10.500V8h6" /><circle cx="9" cy="10" r="1.800" /></svg>
            </NavIcons>
            <NavSearch aria-label="Search" placeholder="Search" />
            <NavUser>
              <NavButton>Support<Caret w={4} /></NavButton>
              <NavButton>cmeralto<Caret w={4} /></NavButton>
            </NavUser>
          </TopNav>
          <TitleBar>
            <Health />
            <ServiceName>YARN (MR2 Included)</ServiceName>
            <ClusterLink href="#">( Cluster cmeralto )</ClusterLink>
            <TimeSpan>
              <svg width="8" height="8" viewBox="0 0 8 8" fill="#444"><path d="M4 0v8L0 4zM8 0v8L4 4z" /></svg>
              30 minutes preceding June 7, 2017, 11:09 AM UTC
              <svg width="8" height="8" viewBox="0 0 8 8" fill="#aaa"><path d="M0 0v8l4-4zM4 0v8l4-4z" /></svg>
              <svg width="10" height="8" viewBox="0 0 10 8" fill="#aaa"><path d="M0 0v8l4-4zM4 0v8l4-4zM8 0h1.500v8H8z" /></svg>
              <svg width="11" height="10" viewBox="0 0 11 10" fill="none" stroke="#3d86ad"><path d="M.5 0v9.500H11M2 7l3-4 2 2 3-4" /></svg>
              <Arrow d="M5 3L2 6.500l3 3.500" w={6} color="#444" />
            </TimeSpan>
          </TitleBar>
          <SubNav>
            {subLinks.map((t) => <SubLink key={t} href="#" $active={t === "Applications"}>{t}</SubLink>)}
            <SubLink href="#" $pad={13}>Web UI<Caret w={4} /></SubLink>
            <SubLink href="#">Quick Links<Caret w={4} /></SubLink>
            <ActionsSlot><Button $w={60}>Actions<Caret w={4} /></Button></ActionsSlot>
          </SubNav>
          <Body>
            <HeadingRow>
              <Heading>Applications</Heading>
              <Ranges><b>30m</b>{["1h", "2h", "6h", "12h", "1d", "7d", "30d"].map((r) => <a key={r} href="#">{r}</a>)}</Ranges>
            </HeadingRow>
            <SearchPanel onSubmit={(e) => e.preventDefault()}>
              <QueryWrap>
                <Query rows={1} aria-label="Search applications" placeholder="Search for YARN applications, e.g. 'pool = default' or press space to start typeahead." />
                <CaretBar />
                <Grip width="8" height="8" fill="#aaa"><path d="M6 0h2v2H6zM3 3h2v2H3zM6 3h2v2H6zM0 6h2v2H0zM3 6h2v2H3zM6 6h2v2H6z" /></Grip>
              </QueryWrap>
              <Primary $w={51} type="submit">Search</Primary>
              <Primary $w={18} type="button" aria-label="Search options"><Caret w={4} /></Primary>
            </SearchPanel>
            <Columns>
              <Sidebar>
                <SideTitle>Workload Summary</SideTitle>
                <SideNote>(For Completed Applications)</SideNote>
                {facets.map(([name, rows]) => (
                  <Facet key={name} aria-label={name}>
                    <FacetHead><h3>{name}</h3><Bars /></FacetHead>
                    {rows.map(([label, n]) => (
                      <FacetRow key={label}><Tick type="checkbox" /><FacetName>{label}</FacetName>{n}</FacetRow>
                    ))}
                  </Facet>
                ))}
              </Sidebar>
              <Results>
                <TabBar>
                  <PageTab>Results</PageTab>
                  <PageTab $active>Charts</PageTab>
                  <TabActions>
                    <Button $w={129}>Collect Diagnostic Data</Button>
                    <Button $w={48}>Export</Button>
                    <Button $w={96}>Select Attributes</Button>
                  </TabActions>
                </TabBar>
                <Charts>
                  {charts.map((c) => (
                    <Card key={c.title}>
                      <CardHead>
                        <h3>{c.title}</h3>
                        {c.tools && (
                          <CardTools>
                            <svg width="11" height="11" viewBox="0 0 11 11" fill="#888"><path d="M6 0h5v5L9.200 3.200 7 5.500 5.500 4l2.300-2.200zM5 11H0V6l1.800 1.800L4 5.500 5.500 7 3.200 9.200z" /></svg>
                            <svg width="11" height="11" viewBox="0 0 11 11" fill="none" stroke="#888"><circle cx="5.500" cy="5.500" r="3" strokeWidth="2" /><circle cx="5.500" cy="5.500" r="4.700" strokeWidth="1.500" strokeDasharray="1.800 1.890" /></svg>
                          </CardTools>
                        )}
                      </CardHead>
                      {c.unit ? <Plot spec={c} /> : <Empty>NO DATA</Empty>}
                    </Card>
                  ))}
                </Charts>
              </Results>
            </Columns>
          </Body>
        </Page>
        <ScrollTrack>
          <ScrollButton aria-label="Scroll up"><svg width="8" height="6" fill="none" stroke="#444" strokeWidth="2"><path d="M0 5l4-4 4 4" /></svg></ScrollButton>
          <ScrollThumb />
          <Spacer />
          <ScrollButton aria-label="Scroll down"><svg width="8" height="6" fill="none" stroke="#444" strokeWidth="2"><path d="M0 1l4 4 4-4" /></svg></ScrollButton>
        </ScrollTrack>
      </Viewport>

      <Taskbar>
        <StartButton aria-label="Start"><svg width="26" height="26" viewBox="0 0 26 26" fill="#fff"><path d="M0 4l11-2v10.500H0zM12 1.800L26 0v12.500H12zM0 13.500h11V24L0 22zM12 13.500h14V26l-14-2z" /></svg></StartButton>
        {tasks.map((t) => <Task key={t.name} $look={t.look} aria-label={t.name}>{t.icon}</Task>)}
        <Tray>
          <svg width="16" height="16" viewBox="0 0 16 16" fill="#fff"><path d="M4 10l4-4 4 4z" /></svg>
          <svg width="16" height="16" viewBox="0 0 16 16" fill="#fff"><path d="M1 1h1.500v14H1zM4 2h5v6H4zM9.500 3.500H15L14 8H9.500z" /></svg>
          <svg width="16" height="16" viewBox="0 0 16 16" fill="#fff"><path d="M1 3h5v4H4.500v8H3V7H1zM1.500 0h1v2h-1zM4.500 0h1v2h-1z" /><path d="M8.500 2.500h5v12h-5z" stroke="#fff" strokeWidth="1.500" /></svg>
          <svg width="16" height="16" viewBox="0 0 16 16" fill="none" stroke="#fff" strokeWidth="1.300"><path d="M6 2.500h9v8H5M8 14.500h5M10.500 10.500v4M1 1.500h3v4H1zM2.500 5.500v9H5" /></svg>
          <svg width="16" height="16" viewBox="0 0 16 16"><path d="M1 5h3l4-4v13l-4-4H1z" fill="#fff" /><circle cx="11.500" cy="11" r="3.500" fill="#fff" stroke="#e11" strokeWidth="1.800" /><path d="M9 8.500l5 5" stroke="#e11" strokeWidth="1.800" /></svg>
          <Lang>POR</Lang>
          <Clock>12:10<br />07/06/2017</Clock>
        </Tray>
      </Taskbar>
    </Screen>
  );
}
